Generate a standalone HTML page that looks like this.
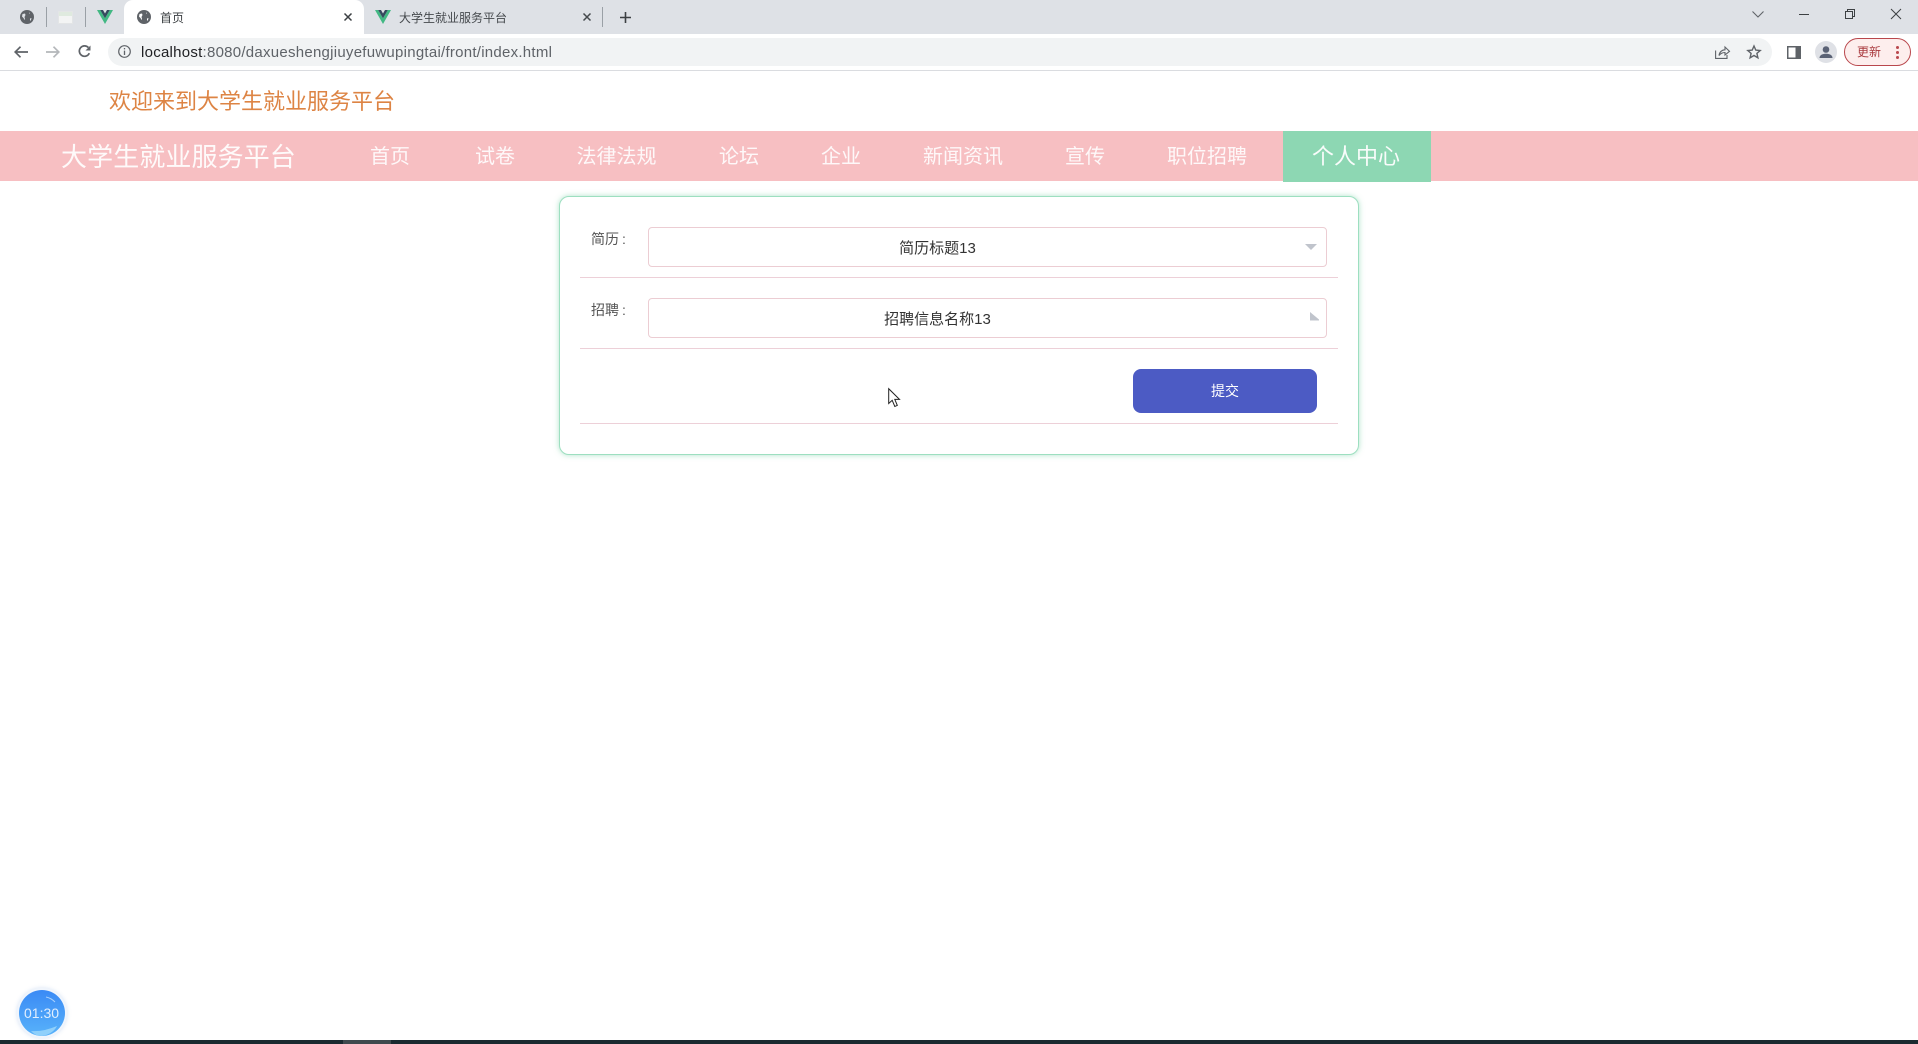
<!DOCTYPE html>
<html lang="zh">
<head>
<meta charset="utf-8">
<title>首页</title>
<style>
html,body{margin:0;padding:0;width:1918px;height:1044px;overflow:hidden;background:#fff;}
body{position:relative;font-family:"Liberation Sans","Noto Sans CJK SC",sans-serif;}
.a{position:absolute;}
.t{position:absolute;white-space:nowrap;line-height:1;}
svg{position:absolute;overflow:visible;}
.nav{color:#fff;font-size:20px;top:147px;opacity:.9;}
.line{position:absolute;left:580px;width:758px;height:1px;background:#edd0d8;}
.sel{position:absolute;left:648px;width:677px;height:38px;border:1px solid #eccdd3;border-radius:4px;background:#fff;}
.lab{font-size:14px;color:#555;}
.lab span{margin-left:3px;}
.opt{font-size:15px;color:#333;width:200px;text-align:center;left:837.500px;}
</style>
</head>
<body>
<!-- browser chrome -->
<div class="a" style="left:0;top:0;width:1918px;height:34px;background:#dee1e6;"></div>
<div class="a" style="left:0;top:34px;width:1918px;height:36px;background:#fff;"></div>
<div class="a" style="left:0;top:70px;width:1918px;height:1px;background:#dadce0;"></div>
<div class="a" style="left:124px;top:0;width:240px;height:34px;background:#fff;border-radius:9px 9px 0 0;"></div>
<div class="a" style="left:108px;top:38px;width:1664px;height:28px;background:#f1f3f4;border-radius:14px;"></div>

<!-- pinned tabs -->
<svg style="left:20px;top:10px" width="14" height="14" viewBox="0 0 14 14"><circle cx="7" cy="7" r="7" fill="#5f6368"/><path d="M2.500 4L5 3.500 5.500 5 4.500 7 5 9 4.500 10 3.500 8 2 6.500ZM9 2.500L10 3 9.500 4ZM10 8.500L11.500 8 11 10 10 11Z" fill="#dee1e6"/></svg>
<div class="a" style="left:46px;top:7px;width:1px;height:20px;background:#9aa0a6;"></div>
<div class="a" style="left:58px;top:11px;width:15px;height:13px;background:#f3f4f4;border:1px solid #e3e5e6;box-sizing:border-box;"></div>
<div class="a" style="left:59px;top:12px;width:13px;height:4px;background:#dfeadf;"></div>
<div class="a" style="left:85px;top:7px;width:1px;height:20px;background:#9aa0a6;"></div>
<svg style="left:97px;top:10px" width="16" height="14" viewBox="0 0 16 14"><path d="M0 0H3.200L8 8.300 12.800 0H16L8 14Z" fill="#42b883"/><path d="M3.200 0H6L8 3.500 10 0H12.800L8 8.300Z" fill="#35495e"/></svg>

<!-- active tab -->
<svg style="left:137px;top:10px" width="14" height="14" viewBox="0 0 14 14"><circle cx="7" cy="7" r="7" fill="#5f6368"/><path d="M2.500 4L5 3.500 5.500 5 4.500 7 5 9 4.500 10 3.500 8 2 6.500ZM9 2.500L10 3 9.500 4ZM10 8.500L11.500 8 11 10 10 11Z" fill="#fff"/></svg>
<div class="t" style="left:160px;top:12px;font-size:12px;color:#3c4043;">首页</div>
<svg style="left:344px;top:13px" width="8" height="8" viewBox="0 0 8 8"><path d="M.5.500L7.500 7.500M7.500.500L.5 7.500" stroke="#3c4043" stroke-width="1.500"/></svg>

<!-- second tab -->
<svg style="left:375px;top:10px" width="16" height="14" viewBox="0 0 16 14"><path d="M0 0H3.200L8 8.300 12.800 0H16L8 14Z" fill="#42b883"/><path d="M3.200 0H6L8 3.500 10 0H12.800L8 8.300Z" fill="#35495e"/></svg>
<div class="t" style="left:399px;top:12px;font-size:12px;color:#45494d;">大学生就业服务平台</div>
<svg style="left:583px;top:13px" width="8" height="8" viewBox="0 0 8 8"><path d="M.5.500L7.500 7.500M7.500.500L.5 7.500" stroke="#45494d" stroke-width="1.500"/></svg>
<div class="a" style="left:602px;top:7px;width:1px;height:20px;background:#9aa0a6;"></div>
<svg style="left:620px;top:12px" width="11" height="11" viewBox="0 0 11 11"><path d="M5.500 0V11M0 5.500H11" stroke="#3c4043" stroke-width="1.600"/></svg>

<!-- window controls -->
<svg style="left:1752px;top:11px" width="12" height="7" viewBox="0 0 12 7"><path d="M.5.500L6 6 11.500.500" fill="none" stroke="#5f6368" stroke-width="1.100"/></svg>
<div class="a" style="left:1799px;top:14px;width:10px;height:1px;background:#3c4043;"></div>
<svg style="left:1845px;top:9px" width="10" height="10" viewBox="0 0 10 10"><path d="M.5 2.500H7.500V9.500H.5ZM2.500 2.500V.5H9.500V7.500H7.500" fill="none" stroke="#3c4043" stroke-width="1"/></svg>
<svg style="left:1891px;top:9px" width="10" height="10" viewBox="0 0 10 10"><path d="M0 0L10 10M10 0L0 10" stroke="#3c4043" stroke-width="1"/></svg>

<!-- toolbar -->
<svg style="left:14px;top:46px" width="14" height="12" viewBox="0 0 14 12"><path d="M14 6H1.500M6.500 .7L1.200 6 6.500 11.300" fill="none" stroke="#5f6368" stroke-width="1.700"/></svg>
<svg style="left:46px;top:46px" width="14" height="12" viewBox="0 0 14 12"><path d="M0 6H12.500M7.500 .7L12.800 6 7.500 11.300" fill="none" stroke="#b4b7ba" stroke-width="1.700"/></svg>
<svg style="left:78px;top:45px" width="13" height="13" viewBox="0 0 13 13"><path d="M11.300 8.200A5.200 5.200 0 1 1 10.400 2.600" fill="none" stroke="#5f6368" stroke-width="1.700"/><path d="M12.500 .5V5.500H7.500Z" fill="#5f6368"/></svg>
<svg style="left:118px;top:45px" width="13" height="13" viewBox="0 0 13 13"><circle cx="6.500" cy="6.500" r="5.800" fill="none" stroke="#5f6368" stroke-width="1.200"/><path d="M6.500 5.600V10M6.500 3V4.400" stroke="#5f6368" stroke-width="1.300"/></svg>
<div class="t" style="left:141px;top:45px;font-size:15px;letter-spacing:.26px;color:#5f6368;"><span style="color:#202124">localhost</span>:8080/daxueshengjiuyefuwupingtai/front/index.html</div>

<svg style="left:1715px;top:46px" width="15" height="13" viewBox="0 0 15 13"><path d="M.6 4.500V12.400H12V9M4 9.500C4.500 6 7 3.800 10 3.800V1L14.500 5.300 10 9V6.500C7.800 6.500 5.500 7.500 4 9.500Z" fill="none" stroke="#5f6368" stroke-width="1.100"/></svg>
<svg style="left:1747px;top:45px" width="14" height="14" viewBox="0 0 14 14"><path d="M7 1L8.800 5.100 13.200 5.500 9.900 8.400 10.900 12.800 7 10.500 3.100 12.800 4.100 8.400 .8 5.500 5.200 5.100Z" fill="none" stroke="#5f6368" stroke-width="1.400"/></svg>
<svg style="left:1787px;top:46px" width="14" height="13" viewBox="0 0 14 13"><rect width="14" height="13" fill="#5f6368"/><rect x="1.500" y="1.500" width="7" height="10" fill="#fff"/></svg>
<div class="a" style="left:1815px;top:41px;width:22px;height:22px;border-radius:50%;background:#dfe1e6;overflow:hidden;">
<svg style="left:0;top:0" width="22" height="22" viewBox="0 0 22 22"><circle cx="11" cy="8.500" r="3.300" fill="#5a6275"/><path d="M4.500 17C4.500 13.800 8 12.800 11 12.800S17.500 13.800 17.500 17Z" fill="#5a6275"/></svg></div>
<div class="a" style="left:1844px;top:38px;width:67px;height:28px;box-sizing:border-box;border:1px solid #b9474c;border-radius:14px;background:#fdeeed;"></div>
<div class="t" style="left:1857px;top:46px;font-size:12px;color:#a93a3e;">更新</div>
<div class="a" style="left:1896px;top:46px;width:3px;height:3px;border-radius:50%;background:#b9474c;box-shadow:0 5px 0 #b9474c,0 10px 0 #b9474c;"></div>

<!-- page header -->
<div class="t" style="left:109px;top:91px;font-size:22px;color:#dd8444;">欢迎来到大学生就业服务平台</div>

<!-- nav -->
<div class="a" style="left:0;top:131px;width:1918px;height:50px;background:#f7bfc2;"></div>
<div class="a" style="left:1283px;top:131px;width:148px;height:51px;background:#8dd7b3;"></div>
<div class="t" style="left:61px;top:144px;font-size:26px;letter-spacing:.1px;color:#fff;opacity:.93;">大学生就业服务平台</div>
<div class="t nav" style="left:370px;">首页</div>
<div class="t nav" style="left:475px;">试卷</div>
<div class="t nav" style="left:576.500px;">法律法规</div>
<div class="t nav" style="left:719px;">论坛</div>
<div class="t nav" style="left:821px;">企业</div>
<div class="t nav" style="left:923px;">新闻资讯</div>
<div class="t nav" style="left:1065px;">宣传</div>
<div class="t nav" style="left:1167px;">职位招聘</div>
<div class="t" style="left:1312px;top:146px;font-size:22px;color:#fff;opacity:.95;">个人中心</div>

<!-- form card -->
<div class="a" style="left:559px;top:196px;width:800px;height:259px;box-sizing:border-box;border:1px solid #9ddfc0;border-radius:10px;background:#fff;box-shadow:0 0 6px rgba(141,215,179,.7);"></div>

<div class="t lab" style="left:591px;top:232px;">简历<span>:</span></div>
<div class="sel" style="top:227px;"></div>
<div class="t opt" style="top:241px;">简历标题13</div>
<svg style="left:1305px;top:244px" width="12" height="6" viewBox="0 0 12 6"><path d="M0 0H12L6 6Z" fill="#c0c4cc"/></svg>
<div class="line" style="top:277px;"></div>

<div class="t lab" style="left:591px;top:303px;">招聘<span>:</span></div>
<div class="sel" style="top:298px;"></div>
<div class="t opt" style="top:312px;">招聘信息名称13</div>
<svg style="left:1310px;top:312px" width="9" height="9" viewBox="0 0 9 9"><path d="M0 0L9 7.500 9 8.500H0Z" fill="#c0c4cc"/></svg>
<div class="line" style="top:348px;"></div>

<div class="a" style="left:1133px;top:369px;width:184px;height:44px;background:#4c5bc4;border-radius:8px;"></div>
<div class="t" style="left:1211px;top:384px;font-size:14px;color:#fff;">提交</div>
<div class="line" style="top:423px;"></div>

<!-- cursor -->
<svg style="left:888px;top:388px" width="13" height="20" viewBox="0 0 13 20"><path d="M.7.7V15.500L4.200 12.300 6.800 18.500 9.300 17.400 6.800 11.400H11.500Z" fill="#fff" stroke="#222" stroke-width="1"/></svg>

<!-- timer -->
<div class="a" style="left:17px;top:988px;width:50px;height:50px;border-radius:50%;background:#f0f5fc;box-shadow:0 0 4px rgba(120,160,220,.3);"></div>
<div class="a" style="left:19px;top:990px;width:46px;height:46px;border-radius:50%;background:linear-gradient(180deg,#3a8af5,#58b2fa);overflow:hidden;">
<svg style="left:0;top:0" width="46" height="46" viewBox="0 0 46 46"><path d="M27 7Q32 8 36 12" fill="none" stroke="#a9d0fb" stroke-width="1"/><path d="M12 41Q24 42 38 36Q34 44 23 46Q16 46 12 41Z" fill="#8fd0fb"/></svg></div>
<div class="t" style="left:24px;top:1006px;font-size:14px;color:#f2f8ff;opacity:.9;">01:30</div>

<!-- bottom bar -->
<div class="a" style="left:0;top:1040px;width:1918px;height:4px;background:#1a2a30;"></div>
<div class="a" style="left:343px;top:1040px;width:48px;height:4px;background:#3f4a4e;"></div>
</body>
</html>
